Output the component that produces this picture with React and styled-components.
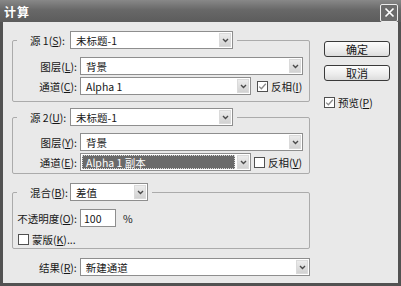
import React from 'react';
import styled, { createGlobalStyle } from 'styled-components';

const FONT = `"Noto Sans CJK SC", "Liberation Sans", sans-serif`;

const Global = createGlobalStyle`
  html, body { margin: 0; padding: 0; background: #e9e9e9; overflow: hidden; }
  * { box-sizing: border-box; }
  u { text-decoration: underline; text-underline-offset: 1px; }
`;

const Window = styled.div`
  width: 401px;
  height: 286px;
  display: flex;
  flex-direction: column;
  background: #525252;
  font-family: ${FONT};
  font-size: 10.5px;
  color: #161616;
`;

const TitleBar = styled.div`
  height: 22px;
  flex: none;
  display: flex;
  align-items: center;
  justify-content: space-between;
  padding: 0 3px 0 4px;
  background: linear-gradient(#888, #686868 45%, #5c5c5c);
`;

const Title = styled.span`
  color: #fff;
  font-weight: bold;
  font-size: 12px;
  letter-spacing: 1px;
`;

const CloseBtn = styled.div`
  width: 18px;
  height: 18px;
  margin-top: 3px;
  border: 1px solid #ececec;
  border-radius: 2px;
  background: #6c6c6c;
  display: flex;
  align-items: center;
  justify-content: center;
`;

const Body = styled.div`
  flex: 1;
  margin: 0 3px 3px;
  background: #e9e9e9;
  display: flex;
  padding: 9px 0 0 9px;
`;

const Main = styled.div`
  width: 298px;
  display: flex;
  flex-direction: column;
`;

const Side = styled.div`
  margin-left: 14px;
  padding-top: 10px;
  display: flex;
  flex-direction: column;
  align-items: flex-start;
`;

const Group = styled.fieldset`
  margin: 0 0 ${p => p.$mb}px 0;
  padding: ${p => p.$pt}px 6px ${p => p.$pb}px 4px;
  border: 1px solid #ababab;
  border-radius: 2px;
  min-width: 0;
`;

const Legend = styled.legend`
  padding: 0 4px 0 13px;
  display: flex;
  align-items: center;
  height: 18px;
`;

const LegendLabel = styled.span`
  width: 38px;
  margin-right: 2px;
  white-space: nowrap;
`;

const Row = styled.div`
  display: flex;
  align-items: center;
  height: ${p => p.$h || 18}px;
  margin-top: ${p => p.$mt || 0}px;
`;

const Label = styled.span`
  width: ${p => p.$w || 60}px;
  margin-right: 3px;
  text-align: right;
  white-space: nowrap;
`;

const SelectBox = styled.div`
  width: ${p => p.$w}px;
  height: 18px;
  border: 1px solid #8e8e8e;
  background: #fff;
  display: flex;
  align-items: stretch;
  padding: 1px;
`;

const SelectValue = styled.div`
  flex: 1;
  display: flex;
  align-items: center;
  padding-left: 4px;
  margin-right: 2px;
  white-space: nowrap;
  background: ${p => (p.$selected ? '#6a6a6a' : 'transparent')};
  color: ${p => (p.$selected ? '#fff' : 'inherit')};
  outline: ${p => (p.$selected ? '1px dotted #d8d8d8' : 'none')};
  outline-offset: -1px;
`;

const ArrowBtn = styled.div`
  width: 12px;
  flex: none;
  background: linear-gradient(#ececec, #d2d2d2);
  border: 1px solid #dadada;
  display: flex;
  align-items: center;
  justify-content: center;
`;

const TextInput = styled.div`
  width: 36px;
  height: 18px;
  border: 1px solid #8e8e8e;
  background: #fff;
  padding-left: 3px;
  display: flex;
  align-items: center;
`;

const Unit = styled.span`
  margin-left: 7px;
`;

const CheckLabel = styled.label`
  display: flex;
  align-items: center;
  margin-left: ${p => p.$ml || 0}px;
  margin-top: ${p => p.$mt || 0}px;
  white-space: nowrap;
`;

const Box = styled.span`
  width: 11px;
  height: 11px;
  border: 1px solid #505050;
  background: #fff;
  margin-right: 3px;
  display: flex;
  align-items: center;
  justify-content: center;
`;

const Button = styled.div`
  width: 66px;
  height: 16px;
  margin-bottom: ${p => p.$mb || 0}px;
  border: 1px solid #3a3a3a;
  border-radius: 3px;
  background: linear-gradient(#fdfdfd, #ececec 60%, #dcdcdc);
  display: flex;
  align-items: center;
  justify-content: center;
  font-size: 11px;
`;

const Chevron = () => (
  <svg width="7" height="5" viewBox="0 0 7 5">
    <path d="M1 1 L3.5 3.5 L6 1" fill="none" stroke="#4a4a4a" strokeWidth="1.4" />
  </svg>
);

const Select = ({ w, children, selected }) => (
  <SelectBox $w={w}>
    <SelectValue $selected={selected}>{children}</SelectValue>
    <ArrowBtn><Chevron /></ArrowBtn>
  </SelectBox>
);

const Check = ({ checked, children, ml, mt }) => (
  <CheckLabel $ml={ml} $mt={mt}>
    <Box>
      {checked && (
        <svg width="9" height="9" viewBox="0 0 9 9">
          <path d="M1.2 4.6 L3.4 6.8 L7.8 1.8" fill="none" stroke="#8a8a8a" strokeWidth="1.3" />
        </svg>
      )}
    </Box>
    <span>{children}</span>
  </CheckLabel>
);

export default function App() {
  return (
    <>
      <Global />
      <Window>
        <TitleBar>
          <Title>计算</Title>
          <CloseBtn>
            <svg width="11" height="11" viewBox="0 0 11 11">
              <path d="M1.5 1.5 L9.5 9.5 M9.5 1.5 L1.5 9.5" stroke="#fff" strokeWidth="1.7" />
            </svg>
          </CloseBtn>
        </TitleBar>
        <Body>
          <Main>
            <Group $pt={8} $pb={6} $mb={6}>
              <Legend>
                <LegendLabel>源 1(<u>S</u>):</LegendLabel>
                <Select w={163}>未标题-1</Select>
              </Legend>
              <Row>
                <Label>图层(<u>L</u>):</Label>
                <Select w={223}>背景</Select>
              </Row>
              <Row $mt={2}>
                <Label>通道(<u>C</u>):</Label>
                <Select w={171}>Alpha 1</Select>
                <Check checked ml={6}>反相(<u>I</u>)</Check>
              </Row>
            </Group>

            <Group $pt={7} $pb={2} $mb={9}>
              <Legend>
                <LegendLabel>源 2(<u>U</u>):</LegendLabel>
                <Select w={163}>未标题-1</Select>
              </Legend>
              <Row>
                <Label>图层(<u>Y</u>):</Label>
                <Select w={223}>背景</Select>
              </Row>
              <Row $mt={2}>
                <Label>通道(<u>E</u>):</Label>
                <Select w={171} selected>Alpha 1 副本</Select>
                <Check ml={3}>反相(<u>V</u>)</Check>
              </Row>
            </Group>

            <Group $pt={8} $pb={3} $mb={9}>
              <Legend>
                <LegendLabel>混合(<u>B</u>):</LegendLabel>
                <Select w={78}>差值</Select>
              </Legend>
              <Row>
                <Label>不透明度(<u>O</u>):</Label>
                <TextInput>100</TextInput>
                <Unit>%</Unit>
              </Row>
              <Row $h={12} $mt={6}>
                <Check ml={1}>蒙版(<u>K</u>)...</Check>
              </Row>
            </Group>

            <Row>
              <Label $w={65}>结果(<u>R</u>):</Label>
              <Select w={231}>新建通道</Select>
            </Row>
          </Main>
          <Side>
            <Button $mb={8}>确定</Button>
            <Button $mb={14}>取消</Button>
            <Check checked>预览(<u>P</u>)</Check>
          </Side>
        </Body>
      </Window>
    </>
  );
}
